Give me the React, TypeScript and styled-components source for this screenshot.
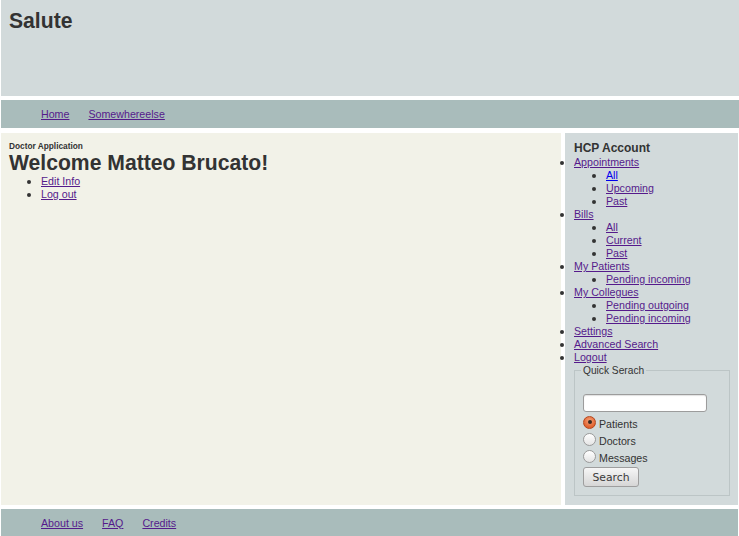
import React from "react";
import styled, { createGlobalStyle } from "styled-components";

const Global = createGlobalStyle`
  html, body { margin: 0; padding: 0; background: #ffffff; }
  body {
    font-family: "Liberation Sans", Arial, sans-serif;
    color: #333333;
    font-size: 10.67px;
  }
  a { color: #551a8b; }
  a.fresh { color: #0000ee; }
`;

const Page = styled.div`
  width: 739px;
  height: 536px;
  display: flex;
  flex-direction: column;
  overflow: hidden;
`;

const Header = styled.header`
  height: 96px;
  margin-left: 1px;
  background: #d2dadb;
  box-sizing: border-box;
  padding: 9px 8px;
`;

const SiteTitle = styled.h1`
  margin: 0;
  font-size: 21.15px;
  line-height: 24px;
  font-weight: bold;
  color: #333333;
`;

const Bar = styled.nav<{ $h: number; $top: number; $right: number }>`
  height: ${(p) => p.$h}px;
  margin: ${(p) => p.$top}px ${(p) => p.$right}px 0 1px;
  background: #a9bcbb;
  display: flex;
  align-items: center;
  gap: 19px;
  padding-left: 40px;
  font-size: 10.67px;
`;

const Middle = styled.div`
  height: 372px;
  margin: 5px 1px 0 1px;
  display: flex;
  gap: 4px;
`;

const Main = styled.main`
  flex: 1;
  background: #f2f2e8;
  box-sizing: border-box;
  padding: 8px 8px;
`;

const Kicker = styled.div`
  font-size: 8.3px;
  font-weight: bold;
  line-height: 10px;
`;

const Welcome = styled.h2`
  margin: 0;
  font-size: 21.15px;
  line-height: 24px;
  font-weight: bold;
`;

const List = styled.ul<{ $pad: number }>`
  margin: 0;
  padding-left: ${(p) => p.$pad}px;
  list-style: disc;
  font-size: 10.67px;
  line-height: 13px;
  li::marker { font-size: 12px; }
`;

const Side = styled.aside`
  width: 173px;
  background: #d2dadb;
  box-sizing: border-box;
  padding: 8px 8px 0 0;
`;

const SideTitle = styled.h3`
  margin: 0 0 0 9px;
  font-size: 12px;
  line-height: 15px;
  font-weight: bold;
`;

const Fieldset = styled.fieldset`
  margin: 0 0 0 9px;
  border: 1px solid #bcc5c6;
  padding: 17px 8px 8px 8px;
  display: flex;
  flex-direction: column;
  align-items: flex-start;
  min-width: 0;
`;

const Legend = styled.legend`
  padding: 0 2px;
  margin-left: -2px;
  font-size: 10.2px;
  line-height: 13px;
`;

const SearchInput = styled.input`
  width: 124px;
  height: 18px;
  box-sizing: border-box;
  border: 1px solid #9c9c9c;
  border-radius: 3px;
  background: #ffffff;
  box-shadow: inset 0 1px 1px rgba(0, 0, 0, 0.12);
  margin: 0 0 3px 0;
  outline: none;
`;

const RadioRow = styled.label`
  display: flex;
  align-items: center;
  height: 17px;
  gap: 3px;
  font-size: 10.67px;
  padding-top: 1px;
  box-sizing: border-box;
`;

const Radio = styled.input`
  appearance: none;
  -webkit-appearance: none;
  width: 13px;
  height: 13px;
  margin: -4px 0 0 0;
  border-radius: 50%;
  box-sizing: border-box;
  border: 1px solid #9a9a9a;
  background: linear-gradient(#ffffff, #e4e4e4);
  display: grid;
  place-items: center;
  &:checked {
    border-color: #b4471f;
    background: radial-gradient(circle at 50% 35%, #f7a27a, #e0622f 70%);
  }
  &:checked::after {
    content: "";
    width: 4px;
    height: 4px;
    border-radius: 50%;
    background: #3a2a22;
  }
`;

const Button = styled.button`
  width: 56px;
  height: 20px;
  margin-top: 1px;
  box-sizing: border-box;
  border: 1px solid #9e9e9e;
  border-radius: 3px;
  background: linear-gradient(#f6f6f6, #d6d6d6);
  font-family: "DejaVu Sans", sans-serif;
  font-size: 10.8px;
  color: #3a3a3a;
  padding: 0;
`;

const appointments = ["All", "Upcoming", "Past"];
const bills = ["All", "Current", "Past"];

export default function App() {
  return (
    <Page>
      <Global />
      <Header>
        <SiteTitle>Salute</SiteTitle>
      </Header>
      <Bar $h={28} $top={4} $right={0}>
        <a href="#">Home</a>
        <a href="#">Somewhereelse</a>
      </Bar>
      <Middle>
        <Main>
          <Kicker>Doctor Application</Kicker>
          <Welcome>Welcome Matteo Brucato!</Welcome>
          <List $pad={32}>
            <li><a href="#">Edit Info</a></li>
            <li><a href="#">Log out</a></li>
          </List>
        </Main>
        <Side>
          <SideTitle>HCP Account</SideTitle>
          <List $pad={9}>
            <li>
              <a href="#">Appointments</a>
              <List $pad={32}>
                {appointments.map((a, i) => (
                  <li key={a}>
                    <a href="#" className={i === 0 ? "fresh" : undefined}>{a}</a>
                  </li>
                ))}
              </List>
            </li>
            <li>
              <a href="#">Bills</a>
              <List $pad={32}>
                {bills.map((b) => (
                  <li key={b}><a href="#">{b}</a></li>
                ))}
              </List>
            </li>
            <li>
              <a href="#">My Patients</a>
              <List $pad={32}>
                <li><a href="#">Pending incoming</a></li>
              </List>
            </li>
            <li>
              <a href="#">My Collegues</a>
              <List $pad={32}>
                <li><a href="#">Pending outgoing</a></li>
                <li><a href="#">Pending incoming</a></li>
              </List>
            </li>
            <li><a href="#">Settings</a></li>
            <li><a href="#">Advanced Search</a></li>
            <li><a href="#">Logout</a></li>
          </List>
          <Fieldset>
            <Legend>Quick Serach</Legend>
            <SearchInput type="text" />
            <RadioRow><Radio type="radio" name="q" defaultChecked />Patients</RadioRow>
            <RadioRow><Radio type="radio" name="q" />Doctors</RadioRow>
            <RadioRow><Radio type="radio" name="q" />Messages</RadioRow>
            <Button type="button">Search</Button>
          </Fieldset>
        </Side>
      </Middle>
      <Bar $h={27} $top={4} $right={1}>
        <a href="#">About us</a>
        <a href="#">FAQ</a>
        <a href="#">Credits</a>
      </Bar>
    </Page>
  );
}
